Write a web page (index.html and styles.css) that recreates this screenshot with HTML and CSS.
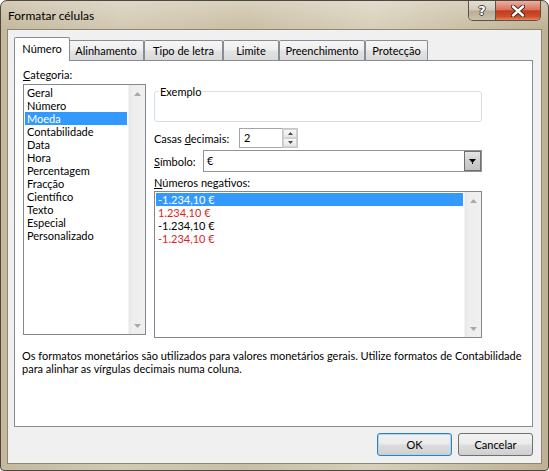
FILE: index.html
```html
<!DOCTYPE html>
<html lang="pt">
<head>
<meta charset="utf-8">
<title>Formatar células</title>
<link rel="stylesheet" href="styles.css">
</head>
<body>
<div class="window">
  <div class="titlebar">
    <span class="title">Formatar células</span>
    <div class="caption">
      <div class="cap-btn help"><span class="help-glyph">?</span></div>
      <div class="cap-btn close">
        <svg width="14" height="12" viewBox="0 0 14 12"><path d="M2 1.5 L12 10.5 M12 1.5 L2 10.5" stroke="#3b2a20" stroke-width="4.4" stroke-linecap="round"/><path d="M2 1.5 L12 10.5 M12 1.5 L2 10.5" stroke="#ffffff" stroke-width="2.4" stroke-linecap="round"/></svg>
      </div>
    </div>
  </div>
  <div class="client">
    <div class="tabs">
      <div class="tab sel t-num">Número</div>
      <div class="tab t-ali">Alinhamento</div>
      <div class="tab t-tip">Tipo de letra</div>
      <div class="tab t-lim">Limite</div>
      <div class="tab t-pre">Preenchimento</div>
      <div class="tab t-pro">Protecção</div>
    </div>
    <div class="panel">
      <div class="cols">
        <div class="left">
          <div class="lbl-line"><u>C</u>ategoria:</div>
          <div class="listbox cat">
            <div class="items">
              <div class="item">Geral</div>
              <div class="item">Número</div>
              <div class="item sel">Moeda</div>
              <div class="item">Contabilidade</div>
              <div class="item">Data</div>
              <div class="item">Hora</div>
              <div class="item">Percentagem</div>
              <div class="item">Fracção</div>
              <div class="item">Científico</div>
              <div class="item">Texto</div>
              <div class="item">Especial</div>
              <div class="item">Personalizado</div>
            </div>
            <div class="scroll">
              <div class="sarrow"><svg width="7" height="4" viewBox="0 0 7 4"><path d="M0 4 L3.5 0 L7 4Z" fill="#a9a9a9"/></svg></div>
              <div class="sarrow"><svg width="7" height="4" viewBox="0 0 7 4"><path d="M0 0 L3.5 4 L7 0Z" fill="#a9a9a9"/></svg></div>
            </div>
          </div>
        </div>
        <div class="right">
          <fieldset class="group">
            <legend>Exemplo</legend>
            <div class="group-body"></div>
          </fieldset>
          <div class="row dec">
            <span class="lbl-dec">Casas <u>d</u>ecimais:</span>
            <div class="spin">
              <div class="spin-val">2</div>
              <div class="spin-btns">
                <div class="sbtn"><svg width="5" height="3" viewBox="0 0 5 3"><path d="M0 3 L2.5 0 L5 3Z" fill="#4a4a4a"/></svg></div>
                <div class="sbtn"><svg width="5" height="3" viewBox="0 0 5 3"><path d="M0 0 L2.5 3 L5 0Z" fill="#4a4a4a"/></svg></div>
              </div>
            </div>
          </div>
          <div class="row sym">
            <span class="lbl-sym"><u>S</u>ímbolo:</span>
            <div class="combo">
              <div class="combo-val">€</div>
              <div class="combo-btn"><svg width="7" height="5" viewBox="0 0 7 5"><path d="M0 0 L7 0 L3.5 4Z" fill="#000"/><rect x="3" y="4" width="1" height="1" fill="#000"/></svg></div>
            </div>
          </div>
          <div class="lbl-line neg-label"><u>N</u>úmeros negativos:</div>
          <div class="listbox neg">
            <div class="items">
              <div class="item sel">-1.234,10 €</div>
              <div class="item red">1.234,10 €</div>
              <div class="item">-1.234,10 €</div>
              <div class="item red">-1.234,10 €</div>
            </div>
            <div class="scroll">
              <div class="sarrow"><svg width="7" height="4" viewBox="0 0 7 4"><path d="M0 4 L3.5 0 L7 4Z" fill="#a9a9a9"/></svg></div>
              <div class="sarrow"><svg width="7" height="4" viewBox="0 0 7 4"><path d="M0 0 L3.5 4 L7 0Z" fill="#a9a9a9"/></svg></div>
            </div>
          </div>
        </div>
      </div>
      <p class="desc">Os formatos monetários são utilizados para valores monetários gerais. Utilize formatos de Contabilidade<br>para alinhar as vírgulas decimais numa coluna.</p>
    </div>
    <div class="buttons">
      <div class="btn default">OK</div>
      <div class="btn">Cancelar</div>
    </div>
  </div>
</div>
</body>
</html>
```
FILE: styles.css
```css
* { box-sizing: border-box; }
html, body { margin: 0; padding: 0; background: #ffffff; }
body { font-family: Lato, "Liberation Sans", sans-serif; font-size: 11px; color: #000; }

.window {
  width: 549px;
  height: 471px;
  border: 1px solid #4d473d;
  border-radius: 7px 7px 4px 4px;
  background:
    linear-gradient(to bottom, rgba(255,255,255,0.28), rgba(255,255,255,0) 28px),
    linear-gradient(to right, #c4b89d 0%, #d3c9b3 22%, #cabea4 45%, #d8cfba 68%, #c8bca1 88%, #bfb293 100%);
  padding: 0 6px 6px;
  display: flex;
  flex-direction: column;
}

.titlebar {
  height: 28px;
  display: flex;
  justify-content: space-between;
  align-items: flex-start;
}
.title { padding-left: 1px; line-height: 29px; font-size: 12px; color: #000; }

.caption {
  display: flex;
  height: 20px;
  margin-right: 1px;
  border: 1px solid #5b5247;
  border-top: none;
  border-radius: 0 0 5px 5px;
  overflow: hidden;
}
.cap-btn { display: flex; align-items: center; justify-content: center; }
.help {
  width: 27px;
  border-right: 1px solid #5b5247;
  background: linear-gradient(#e4dfd4, #d2cabb 48%, #b8ad95 52%, #cbc2ad);
}
.help-glyph {
  font-family: "DejaVu Sans", sans-serif;
  font-weight: bold;
  font-size: 13px;
  color: #fff;
  text-shadow: 1px 0 #4a4035, -1px 0 #4a4035, 0 1px #4a4035, 0 -1px #4a4035;
  margin-top: -1px;
}
.close {
  width: 44px;
  background: linear-gradient(#eab0a2, #d9735d 45%, #c43b1d 52%, #cf4f2c 82%, #e5865a);
}

.client {
  flex: 1;
  border: 1px solid #8d8777;
  background: #f0f0f0;
  padding: 7px 8px 0 6px;
  display: flex;
  flex-direction: column;
}

.tabs {
  display: flex;
  align-items: flex-end;
  height: 23px;
  padding-left: 2px;
}
.tab {
  height: 20px;
  border: 1px solid #898c95;
  border-bottom: none;
  border-radius: 2px 2px 0 0;
  background: linear-gradient(#f6f6f6, #eeeeee 48%, #e3e3e3 52%, #dadada);
  display: flex;
  align-items: center;
  justify-content: center;
  white-space: nowrap;
}
.tab.sel {
  height: 24px;
  background: #fff;
  margin: 0 -2px -1px;
  position: relative;
  z-index: 1;
  padding-bottom: 2px;
}
.t-num { width: 56px; }
.t-ali { width: 76px; }
.t-tip { width: 79px; }
.t-lim { width: 56px; }
.t-pre { width: 86px; }
.t-pro { width: 63px; }

.panel {
  width: 519px;
  height: 367px;
  border: 1px solid #898c95;
  background: #fff;
  padding: 7px 0 0 7px;
}

.cols { display: flex; gap: 8px; }
.left { padding-left: 1px; }
.lbl-line { line-height: 13px; height: 13px; margin-bottom: 3px; white-space: nowrap; }

.listbox {
  display: flex;
  border: 1px solid #828790;
  background: #fff;
}
.listbox.cat { width: 123px; height: 251px; }
.listbox.neg { width: 328px; height: 147px; }
.items { flex: 1; padding: 1px; }
.item { height: 13px; line-height: 13px; padding-left: 2px; white-space: nowrap; }
.item.sel { background: #3399ff; color: #fff; }
.item.red { color: #d91e1e; }
.scroll {
  width: 17px;
  background: linear-gradient(to right, #e6e6e6, #eeeeee 20%, #f0f0f0);
  border-left: 1px solid #f4f4f4;
  display: flex;
  flex-direction: column;
  justify-content: space-between;
}
.sarrow { height: 17px; display: flex; align-items: center; justify-content: center; }

.right { width: 328px; padding-top: 17px; }

.group {
  margin: 0;
  padding: 0 0 0 4px;
  border: 1px solid #d5dfe5;
  border-radius: 3px;
  width: 328px;
}
.group legend { padding: 0 1px; line-height: 13px; font-size: 11px; }
.group-body { height: 23px; }

.row { display: flex; align-items: center; white-space: nowrap; }
.row.dec { margin-top: 6px; height: 20px; }
.row.sym { margin-top: 2px; height: 22px; }
.lbl-dec { width: 85px; }
.lbl-sym { width: 49px; }

.spin { display: flex; height: 20px; }
.spin-val {
  width: 43px;
  height: 20px;
  border: 1px solid #a5a5a5;
  border-right: none;
  padding-left: 4px;
  line-height: 18px;
  background: #fff;
}
.spin-btns {
  width: 16px;
  height: 20px;
  display: flex;
  flex-direction: column;
  gap: 0;
  border: 1px solid #c6c6c6;
  background: #fff;
}
.sbtn {
  flex: 1;
  border: 1px solid #d3d3d3;
  background: linear-gradient(#f7f7f7, #e6e6e6);
  display: flex;
  align-items: center;
  justify-content: center;
}

.combo {
  width: 279px;
  height: 22px;
  display: flex;
  border: 1px solid #939393;
  background: #fff;
}
.combo-val { flex: 1; padding-left: 3px; line-height: 20px; }
.combo-btn {
  width: 17px;
  height: 20px;
  border: 1px solid #6f6f6f;
  background: linear-gradient(#e6e6e6, #cfcfcf 50%, #c4c4c4);
  display: flex;
  align-items: center;
  justify-content: center;
}

.neg-label { margin-top: 4px; margin-bottom: 2px; }

.desc { margin: 11px 0 0 0; line-height: 13px; white-space: nowrap; }

.buttons {
  display: flex;
  justify-content: flex-end;
  gap: 6px;
  margin-top: 6px;
}
.btn {
  width: 75px;
  height: 23px;
  border: 1px solid #707070;
  border-radius: 3px;
  background: linear-gradient(#f2f2f2, #ebebeb 48%, #dddddd 52%, #cfcfcf);
  display: flex;
  align-items: center;
  justify-content: center;
}
.btn.default {
  border-color: #3c7fb1;
  box-shadow: inset 0 0 0 1px #9fd9f6;
}
```
